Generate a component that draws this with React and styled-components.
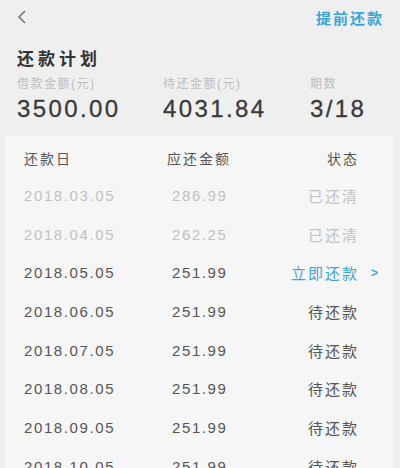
import styled, { createGlobalStyle } from 'styled-components'

const GlobalStyle = createGlobalStyle`
    body {
        margin: 0;
        background: #efefef;
        font-family: "Liberation Sans", "Noto Sans CJK SC", sans-serif;
    }
`

const plan = [
    { date: '2018.03.05', amount: '286.99', status: 'paid' },
    { date: '2018.04.05', amount: '262.25', status: 'paid' },
    { date: '2018.05.05', amount: '251.99', status: 'current' },
    { date: '2018.06.05', amount: '251.99', status: 'pending' },
    { date: '2018.07.05', amount: '251.99', status: 'pending' },
    { date: '2018.08.05', amount: '251.99', status: 'pending' },
    { date: '2018.09.05', amount: '251.99', status: 'pending' },
    { date: '2018.10.05', amount: '251.99', status: 'pending' },
]

const statusText = {
    paid: '已还清',
    current: '立即还款',
    pending: '待还款',
}

function App() {
    return (
        <Page>
            <GlobalStyle />
            <NavBar>
                <BackButton aria-label="返回">
                    <svg width="10" height="16" viewBox="0 0 10 16">
                        <path d="M8 2 L2 8 L8 14" fill="none" stroke="#777" strokeWidth="1.6" />
                    </svg>
                </BackButton>
                <NavAction>提前还款</NavAction>
            </NavBar>

            <Title>还款计划</Title>
            <Stats>
                <Stat>
                    <StatLabel>借款金额(元)</StatLabel>
                    <StatValue>3500.00</StatValue>
                </Stat>
                <Stat>
                    <StatLabel>待还金额(元)</StatLabel>
                    <StatValue>4031.84</StatValue>
                </Stat>
                <Stat>
                    <StatLabel>期数</StatLabel>
                    <StatValue>3/18</StatValue>
                </Stat>
            </Stats>

            <Card>
                <Row $head>
                    <Cell>还款日</Cell>
                    <Cell $shift>应还金额</Cell>
                    <StatusCell>状态</StatusCell>
                    <span />
                </Row>
                {plan.map((item) => (
                    <Row key={item.date} $muted={item.status === 'paid'}>
                        <Cell>{item.date}</Cell>
                        <Cell>{item.amount}</Cell>
                        <StatusCell $link={item.status === 'current'}>
                            {statusText[item.status]}
                        </StatusCell>
                        {item.status === 'current' ? <Arrow>&gt;</Arrow> : <span />}
                    </Row>
                ))}
            </Card>
        </Page>
    )
}

export default App

const Page = styled.div`
    width: 400px;
    height: 468px;
    overflow: hidden;
`

const NavBar = styled.header`
    height: 34px;
    display: flex;
    align-items: center;
    justify-content: space-between;
    padding: 0 16px 0 17px;
`

const BackButton = styled.button`
    border: 0;
    background: none;
    padding: 0;
    display: flex;
    align-items: center;
`

const NavAction = styled.span`
    color: #3aa6d8;
    font-size: 15px;
    font-weight: bold;
    letter-spacing: 2px;
`

const Title = styled.h1`
    margin: 14px 0 0 17px;
    font-size: 17px;
    line-height: 24px;
    font-weight: bold;
    color: #333;
    letter-spacing: 4px;
`

const Stats = styled.div`
    display: grid;
    grid-template-columns: 146px 147px 1fr;
    padding: 0 0 0 17px;
    margin-top: 4px;
`

const Stat = styled.div`
    display: flex;
    flex-direction: column;
`

const StatLabel = styled.span`
    font-size: 12px;
    line-height: 16px;
    color: #bdbdbd;
    letter-spacing: 1.5px;
`

const StatValue = styled.span`
    font-size: 24px;
    line-height: 30px;
    color: #3a3a3a;
    letter-spacing: 2.4px;
    margin-top: 2px;
    -webkit-text-stroke: 0.3px #3a3a3a;
`

const Card = styled.section`
    margin: 12px 7px 0 5px;
    background: #f6f6f6;
    padding-top: 3px;
`

const Row = styled.div`
    display: grid;
    grid-template-columns: 148px 1fr 80px 36px;
    align-items: center;
    height: ${(p) => (p.$head ? '37px' : '38.7px')};
    padding-left: 19px;
    font-size: ${(p) => (p.$head ? '14px' : '15px')};
    color: ${(p) => (p.$muted ? '#c2c2c2' : '#555')};
    letter-spacing: ${(p) => (p.$head ? '2px' : '1.6px')};
`

const Cell = styled.span`
    white-space: nowrap;
    margin-left: ${(p) => (p.$shift ? '-5px' : '0')};
`

const StatusCell = styled.span`
    text-align: right;
    white-space: nowrap;
    letter-spacing: 2px;
    margin-right: -2px;
    color: ${(p) => (p.$link ? '#3aa6d8' : 'inherit')};
`

const Arrow = styled.span`
    color: #3aa6d8;
    font-size: 12px;
    font-weight: bold;
    padding-left: 14px;
`
